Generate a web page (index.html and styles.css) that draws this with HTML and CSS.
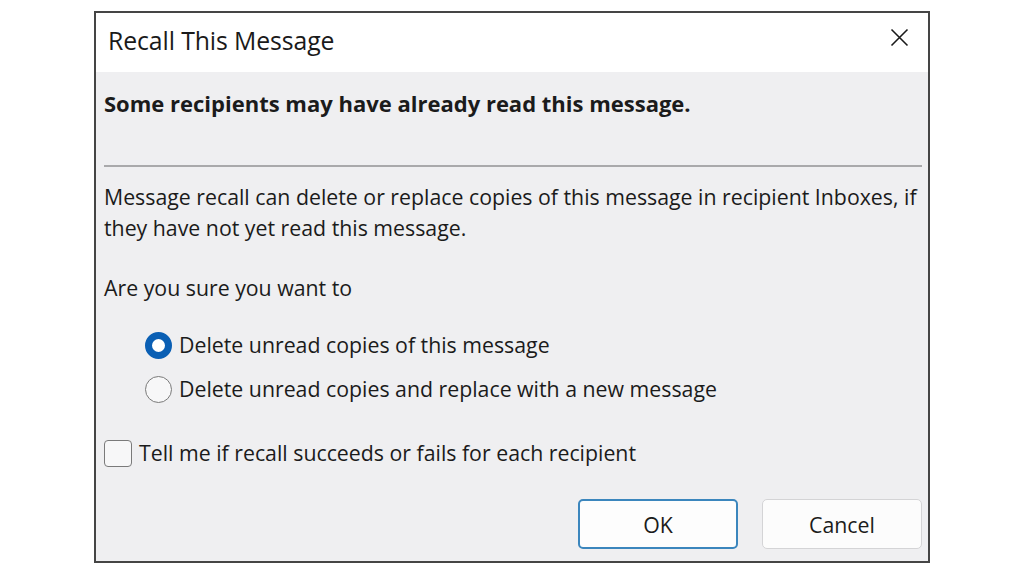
FILE: index.html
```html
<!DOCTYPE html>
<html lang="en">
<head>
<meta charset="utf-8">
<title>Recall This Message</title>
<link rel="stylesheet" href="styles.css">
</head>
<body>
<div class="stage">
  <div class="dialog">
    <div class="titlebar">
      <span class="title">Recall This Message</span>
      <span class="close" aria-label="Close">
        <svg width="19" height="19" viewBox="0 0 19 19"><path d="M1.5 1.5 L17.5 17.5 M17.5 1.5 L1.5 17.5" stroke="#1a1a1a" stroke-width="1.6" fill="none"/></svg>
      </span>
    </div>
    <div class="body">
      <div class="warning">Some recipients may have already read this message.</div>
      <div class="separator"></div>
      <p class="desc">Message recall can delete or replace copies of this message in recipient Inboxes, if they have not yet read this message.</p>
      <p class="ask">Are you sure you want to</p>
      <div class="options">
        <label class="option"><span class="radio checked"></span><span>Delete unread copies of this message</span></label>
        <label class="option"><span class="radio"></span><span>Delete unread copies and replace with a new message</span></label>
      </div>
      <label class="check-row"><span class="checkbox"></span><span>Tell me if recall succeeds or fails for each recipient</span></label>
      <div class="buttons">
        <button class="btn primary">OK</button>
        <button class="btn">Cancel</button>
      </div>
    </div>
  </div>
</div>
</body>
</html>
```
FILE: styles.css
```css
html, body {
  margin: 0;
  padding: 0;
  background: #ffffff;
}
body {
  font-family: "Open Sans", "Noto Sans", sans-serif;
  color: #1b1b1b;
}
.stage {
  padding: 11px 0 0 94px;
}
.dialog {
  box-sizing: border-box;
  width: 836px;
  height: 552px;
  border: 2px solid #454545;
  display: flex;
  flex-direction: column;
  background: #efeff1;
}
.titlebar {
  box-sizing: border-box;
  height: 59px;
  background: #ffffff;
  display: flex;
  align-items: center;
  justify-content: space-between;
  padding: 0 19px 6px 12px;
}
.title {
  font-size: 24.8px;
  color: #1a1a1a;
  letter-spacing: -0.1px;
}
.close {
  display: flex;
  width: 19px;
  height: 19px;
  margin-top: -4px;
}
.body {
  flex: 1;
  padding: 0 6px 0 8px;
  display: flex;
  flex-direction: column;
  font-size: 21.3px;
}
.warning {
  font-weight: 700;
  font-size: 22px;
  margin-top: 17px;
  line-height: 28px;
}
.separator {
  height: 2px;
  background: #a9a9ab;
  margin-top: 48px;
}
.desc {
  margin: 14px 0 0;
  line-height: 31px;
}
.ask {
  margin: 29px 0 0;
  line-height: 31px;
}
.options {
  display: flex;
  flex-direction: column;
  gap: 14px;
  margin-top: 27px;
  padding-left: 41px;
}
.option, .check-row {
  display: flex;
  align-items: center;
  gap: 7px;
  line-height: 30px;
}
.radio {
  box-sizing: border-box;
  width: 27px;
  height: 27px;
  border-radius: 50%;
  border: 1.5px solid #7a7a7a;
  background: #f7f7f8;
  flex: none;
}
.radio.checked {
  border: 7px solid #0a5fb4;
  background: #ffffff;
}
.check-row {
  margin-top: 34px;
}
.checkbox {
  box-sizing: border-box;
  width: 28px;
  height: 27px;
  border-radius: 4px;
  border: 1.5px solid #7a7a7a;
  background: #f7f7f8;
  flex: none;
}
.buttons {
  display: flex;
  justify-content: flex-end;
  gap: 24px;
  margin-top: 31px;
}
.btn {
  box-sizing: border-box;
  width: 160px;
  height: 50px;
  border-radius: 5px;
  border: 1px solid #d4d4d6;
  background: #fcfcfc;
  font-family: "Open Sans", "Noto Sans", sans-serif;
  font-size: 21.3px;
  color: #1b1b1b;
}
.btn.primary {
  border: 2px solid #3b86bd;
  background: #fdfdfd;
}
```
